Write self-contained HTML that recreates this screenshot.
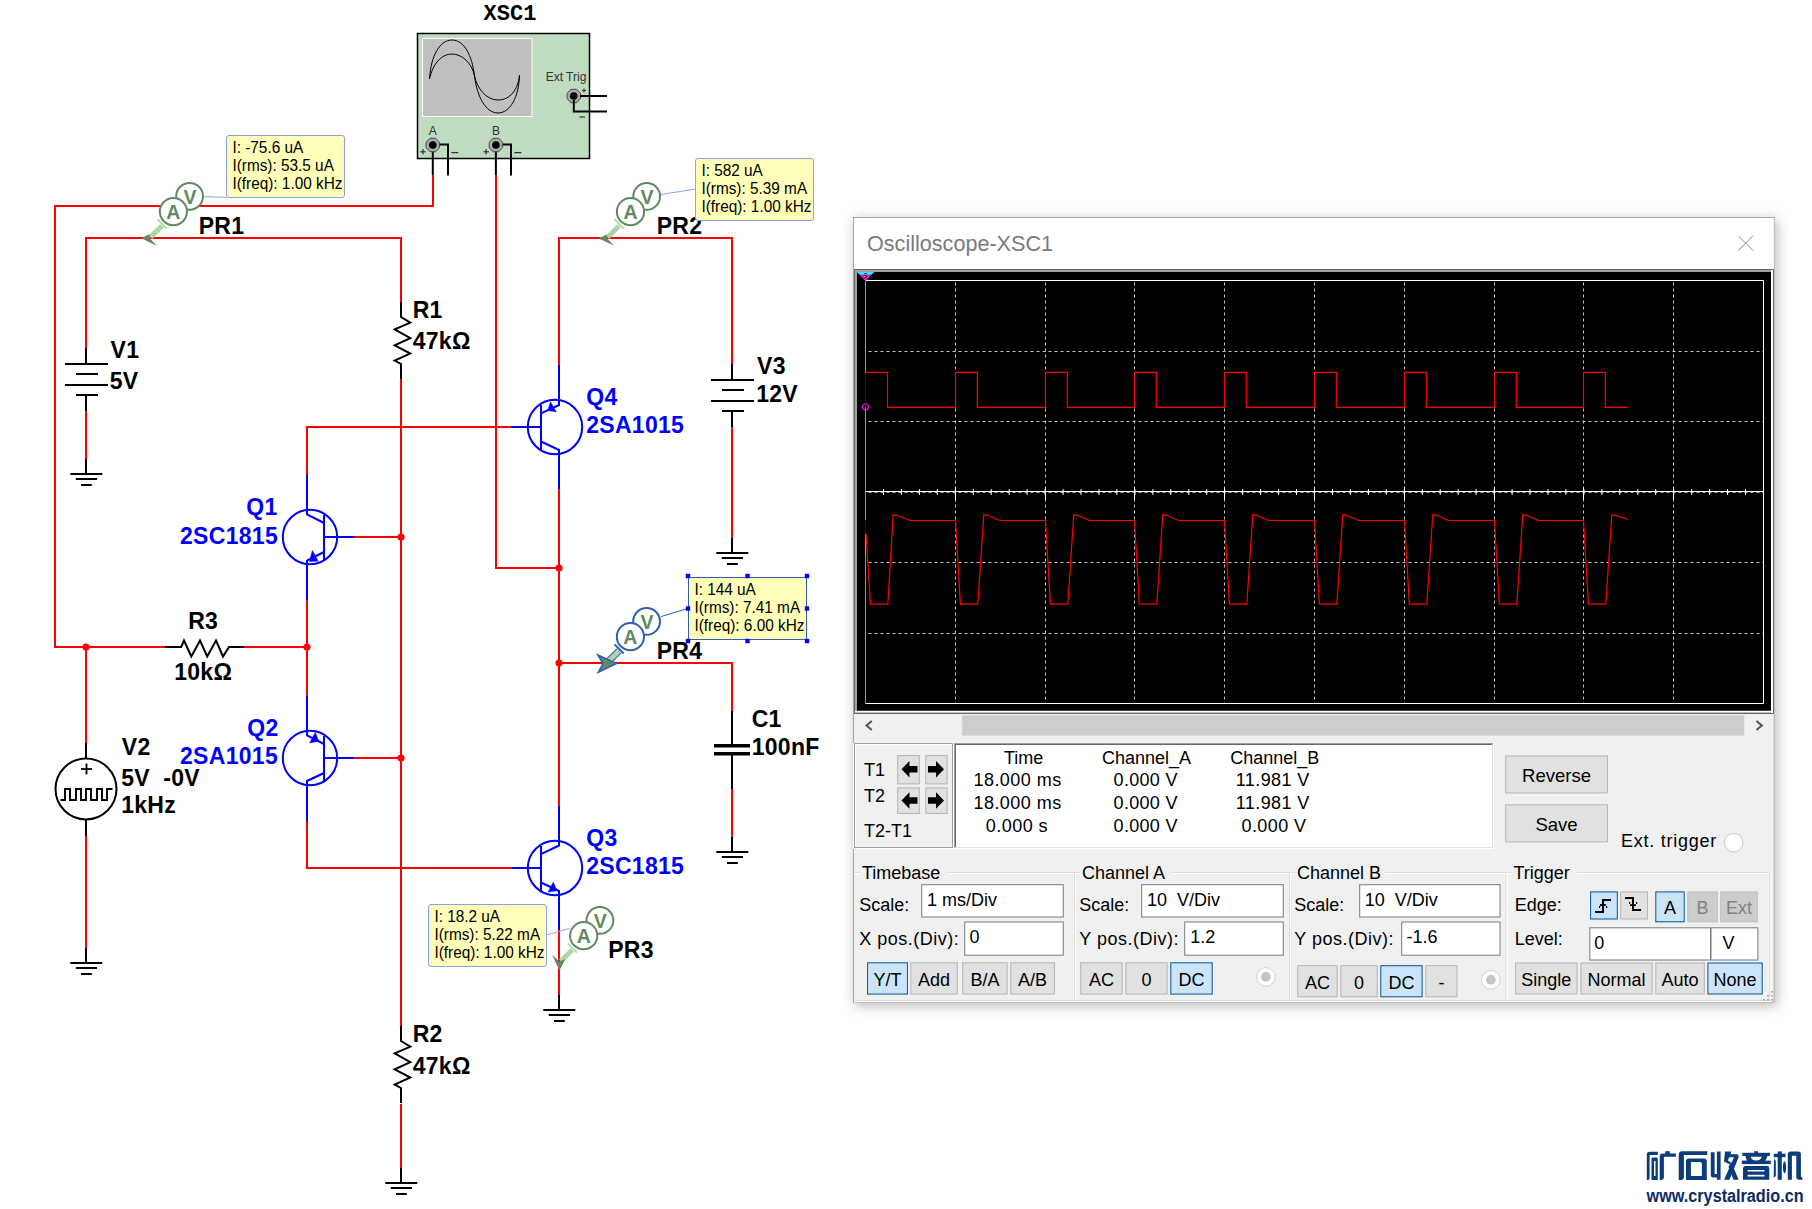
<!DOCTYPE html>
<html><head><meta charset="utf-8">
<style>
html,body{margin:0;padding:0;background:#fff;width:1812px;height:1209px;overflow:hidden}
svg{position:absolute;left:0;top:0}
</style></head><body>
<svg width="1812" height="1209" viewBox="0 0 1812 1209" shape-rendering="auto">
<polyline points="433,175 433,206 55,206 55,647 165,647" stroke="#ff0000" stroke-width="2" fill="none" />
<polyline points="86,349 86,238 401,238 401,302" stroke="#ff0000" stroke-width="2" fill="none" />
<line x1="86" y1="411" x2="86" y2="459" stroke="#ff0000" stroke-width="2"/>
<line x1="401" y1="379" x2="401" y2="1026" stroke="#ff0000" stroke-width="2"/>
<polyline points="307,475 307,427 511,427" stroke="#ff0000" stroke-width="2" fill="none" />
<line x1="354" y1="537" x2="401" y2="537" stroke="#ff0000" stroke-width="2"/>
<line x1="307" y1="600" x2="307" y2="696" stroke="#ff0000" stroke-width="2"/>
<line x1="244" y1="647" x2="307" y2="647" stroke="#ff0000" stroke-width="2"/>
<line x1="86" y1="647" x2="86" y2="743" stroke="#ff0000" stroke-width="2"/>
<line x1="86" y1="836" x2="86" y2="948" stroke="#ff0000" stroke-width="2"/>
<line x1="354" y1="758" x2="401" y2="758" stroke="#ff0000" stroke-width="2"/>
<polyline points="307,821 307,868 512,868" stroke="#ff0000" stroke-width="2" fill="none" />
<line x1="401" y1="1104" x2="401" y2="1168" stroke="#ff0000" stroke-width="2"/>
<polyline points="496,175 496,568 559,568" stroke="#ff0000" stroke-width="2" fill="none" />
<polyline points="559,365 559,238 732,238 732,365" stroke="#ff0000" stroke-width="2" fill="none" />
<line x1="732" y1="427" x2="732" y2="538" stroke="#ff0000" stroke-width="2"/>
<line x1="559" y1="489" x2="559" y2="806" stroke="#ff0000" stroke-width="2"/>
<polyline points="559,663 732,663 732,711" stroke="#ff0000" stroke-width="2" fill="none" />
<line x1="732" y1="789" x2="732" y2="837" stroke="#ff0000" stroke-width="2"/>
<line x1="559" y1="930" x2="559" y2="995" stroke="#ff0000" stroke-width="2"/>
<circle cx="86" cy="647" r="3.6" fill="#ff0000"/>
<circle cx="307" cy="647" r="3.6" fill="#ff0000"/>
<circle cx="401" cy="537" r="3.6" fill="#ff0000"/>
<circle cx="401" cy="758" r="3.6" fill="#ff0000"/>
<circle cx="559" cy="568" r="3.6" fill="#ff0000"/>
<circle cx="559" cy="663" r="3.6" fill="#ff0000"/>
<line x1="86" y1="348" x2="86" y2="364" stroke="#000000" stroke-width="2"/>
<line x1="65" y1="364" x2="108" y2="364" stroke="#000000" stroke-width="2"/>
<line x1="76" y1="374" x2="98" y2="374" stroke="#000000" stroke-width="2"/>
<line x1="65" y1="385" x2="108" y2="385" stroke="#000000" stroke-width="2"/>
<line x1="76" y1="395" x2="98" y2="395" stroke="#000000" stroke-width="2"/>
<line x1="86" y1="395" x2="86" y2="411" stroke="#000000" stroke-width="2"/>
<line x1="732" y1="364" x2="732" y2="380" stroke="#000000" stroke-width="2"/>
<line x1="711" y1="380" x2="754" y2="380" stroke="#000000" stroke-width="2"/>
<line x1="722" y1="390" x2="744" y2="390" stroke="#000000" stroke-width="2"/>
<line x1="711" y1="401" x2="754" y2="401" stroke="#000000" stroke-width="2"/>
<line x1="722" y1="411" x2="744" y2="411" stroke="#000000" stroke-width="2"/>
<line x1="732" y1="411" x2="732" y2="427" stroke="#000000" stroke-width="2"/>
<line x1="86" y1="459" x2="86" y2="474" stroke="#000000" stroke-width="2"/>
<line x1="70.3" y1="474" x2="102.3" y2="474" stroke="#000000" stroke-width="2"/>
<line x1="75.8" y1="479" x2="97" y2="479" stroke="#000000" stroke-width="2"/>
<line x1="81" y1="485" x2="91.8" y2="485" stroke="#000000" stroke-width="2"/>
<line x1="732" y1="538" x2="732" y2="553" stroke="#000000" stroke-width="2"/>
<line x1="716.3" y1="553" x2="748.3" y2="553" stroke="#000000" stroke-width="2"/>
<line x1="721.8" y1="558" x2="743" y2="558" stroke="#000000" stroke-width="2"/>
<line x1="727" y1="564" x2="737.8" y2="564" stroke="#000000" stroke-width="2"/>
<line x1="86" y1="948" x2="86" y2="963" stroke="#000000" stroke-width="2"/>
<line x1="70.3" y1="963" x2="102.3" y2="963" stroke="#000000" stroke-width="2"/>
<line x1="75.8" y1="968" x2="97" y2="968" stroke="#000000" stroke-width="2"/>
<line x1="81" y1="974" x2="91.8" y2="974" stroke="#000000" stroke-width="2"/>
<line x1="401" y1="1168" x2="401" y2="1183" stroke="#000000" stroke-width="2"/>
<line x1="385.3" y1="1183" x2="417.3" y2="1183" stroke="#000000" stroke-width="2"/>
<line x1="390.8" y1="1188" x2="412" y2="1188" stroke="#000000" stroke-width="2"/>
<line x1="396" y1="1194" x2="406.8" y2="1194" stroke="#000000" stroke-width="2"/>
<line x1="732" y1="837" x2="732" y2="852" stroke="#000000" stroke-width="2"/>
<line x1="716.3" y1="852" x2="748.3" y2="852" stroke="#000000" stroke-width="2"/>
<line x1="721.8" y1="857" x2="743" y2="857" stroke="#000000" stroke-width="2"/>
<line x1="727" y1="863" x2="737.8" y2="863" stroke="#000000" stroke-width="2"/>
<line x1="559" y1="995" x2="559" y2="1010" stroke="#000000" stroke-width="2"/>
<line x1="543.3" y1="1010" x2="575.3" y2="1010" stroke="#000000" stroke-width="2"/>
<line x1="548.8" y1="1015" x2="570" y2="1015" stroke="#000000" stroke-width="2"/>
<line x1="554" y1="1021" x2="564.8" y2="1021" stroke="#000000" stroke-width="2"/>
<polyline points="401,302 401,317 410.3,322.6 394.7,329.3 410.3,338.2 394.7,345.3 410.3,353.5 394.7,360.5 401,364 401,379" stroke="#000000" stroke-width="2" fill="none" />
<polyline points="401,1026 401,1041 410.3,1046.6 394.7,1053.3 410.3,1062.2 394.7,1069.3 410.3,1077.5 394.7,1084.5 401,1088 401,1103" stroke="#000000" stroke-width="2" fill="none" />
<polyline points="165,647 181.2,647 184,640.5 191.3,656.5 200,640.5 207.2,656.5 216,640.5 223,656.5 229,647 244,647" stroke="#000000" stroke-width="2" fill="none" />
<line x1="732" y1="711" x2="732" y2="746" stroke="#000000" stroke-width="2"/>
<rect x="714" y="744" width="36" height="3.5" fill="#000"/>
<rect x="714" y="752" width="36" height="3.5" fill="#000"/>
<line x1="732" y1="755" x2="732" y2="789" stroke="#000000" stroke-width="2"/>
<line x1="86" y1="743" x2="86" y2="758" stroke="#000000" stroke-width="2"/>
<circle cx="86" cy="789" r="30.5" fill="none" stroke="#000" stroke-width="2"/>
<line x1="86" y1="820" x2="86" y2="836" stroke="#000000" stroke-width="2"/>
<line x1="81" y1="769" x2="92" y2="769" stroke="#000000" stroke-width="1.8"/>
<line x1="86.5" y1="763.5" x2="86.5" y2="774.5" stroke="#000000" stroke-width="1.8"/>
<polyline points="60.5,800 65,800 65,789 70,789 70,800 76,800 76,789 81,789 81,800 86,800 86,789 91,789 91,800 97,800 97,789 102,789 102,800 107,800 107,789 112.5,789" stroke="#000000" stroke-width="1.9" fill="none" />
<circle cx="310" cy="537" r="27.2" fill="none" stroke="#0000ff" stroke-width="2"/>
<polyline points="307,475 307,514.5 324,523" stroke="#0000ff" stroke-width="2" fill="none" />
<polyline points="324,552 307,560.5 307,600" stroke="#0000ff" stroke-width="2" fill="none" />
<line x1="324" y1="515" x2="324" y2="560" stroke="#0000ff" stroke-width="2"/>
<line x1="324" y1="537" x2="354" y2="537" stroke="#0000ff" stroke-width="2"/>
<polygon points="312.4,550.5 309.5,561.5 318,561" fill="#0000ff" stroke="#0000ff" stroke-width="0.6"/>
<circle cx="310" cy="758" r="27.2" fill="none" stroke="#0000ff" stroke-width="2"/>
<polyline points="307,696 307,735.5 324,744" stroke="#0000ff" stroke-width="2" fill="none" />
<polyline points="324,773 307,781 307,821" stroke="#0000ff" stroke-width="2" fill="none" />
<line x1="324" y1="736" x2="324" y2="781" stroke="#0000ff" stroke-width="2"/>
<line x1="324" y1="758" x2="354" y2="758" stroke="#0000ff" stroke-width="2"/>
<polygon points="315.2,732.5 309.8,743 318.5,741" fill="#0000ff" stroke="#0000ff" stroke-width="0.6"/>
<circle cx="555" cy="427" r="27.2" fill="none" stroke="#0000ff" stroke-width="2"/>
<polyline points="559,365 559,405 541,413.3" stroke="#0000ff" stroke-width="2" fill="none" />
<polyline points="541,441.5 559,450 559,489" stroke="#0000ff" stroke-width="2" fill="none" />
<line x1="541" y1="405" x2="541" y2="450" stroke="#0000ff" stroke-width="2"/>
<line x1="541" y1="427" x2="511" y2="427" stroke="#0000ff" stroke-width="2"/>
<polygon points="550.5,402 547.8,410.5 556.2,411.8" fill="#0000ff" stroke="#0000ff" stroke-width="0.6"/>
<circle cx="555" cy="868" r="27.2" fill="none" stroke="#0000ff" stroke-width="2"/>
<polyline points="559,806 559,845.5 541,854.2" stroke="#0000ff" stroke-width="2" fill="none" />
<polyline points="541,882.5 559,891 559,930" stroke="#0000ff" stroke-width="2" fill="none" />
<line x1="541" y1="846" x2="541" y2="891" stroke="#0000ff" stroke-width="2"/>
<line x1="541" y1="868" x2="512" y2="868" stroke="#0000ff" stroke-width="2"/>
<polygon points="553.2,882.3 548.2,892 557,890.6" fill="#0000ff" stroke="#0000ff" stroke-width="0.6"/>
<text x="110.5" y="358" font-family="Liberation Sans" font-size="23" font-weight="bold" fill="#000000" text-anchor="start"  letter-spacing="0.3">V1</text>
<text x="109.7" y="389" font-family="Liberation Sans" font-size="23" font-weight="bold" fill="#000000" text-anchor="start"  letter-spacing="0.3">5V</text>
<text x="412.7" y="318" font-family="Liberation Sans" font-size="23" font-weight="bold" fill="#000000" text-anchor="start"  letter-spacing="0.3">R1</text>
<text x="412.7" y="349" font-family="Liberation Sans" font-size="23" font-weight="bold" fill="#000000" text-anchor="start"  letter-spacing="0.3">47kΩ</text>
<text x="412.7" y="1042" font-family="Liberation Sans" font-size="23" font-weight="bold" fill="#000000" text-anchor="start"  letter-spacing="0.3">R2</text>
<text x="412.7" y="1073.5" font-family="Liberation Sans" font-size="23" font-weight="bold" fill="#000000" text-anchor="start"  letter-spacing="0.3">47kΩ</text>
<text x="188.2" y="629" font-family="Liberation Sans" font-size="23" font-weight="bold" fill="#000000" text-anchor="start"  letter-spacing="0.3">R3</text>
<text x="174.2" y="680" font-family="Liberation Sans" font-size="23" font-weight="bold" fill="#000000" text-anchor="start"  letter-spacing="0.3">10kΩ</text>
<text x="121.8" y="755" font-family="Liberation Sans" font-size="23" font-weight="bold" fill="#000000" text-anchor="start"  letter-spacing="0.3">V2</text>
<text x="121.2" y="786" font-family="Liberation Sans" font-size="23" font-weight="bold" fill="#000000" text-anchor="start"  letter-spacing="0.3">5V&#160;&#160;-0V</text>
<text x="121.2" y="812.5" font-family="Liberation Sans" font-size="23" font-weight="bold" fill="#000000" text-anchor="start"  letter-spacing="0.3">1kHz</text>
<text x="757" y="373.5" font-family="Liberation Sans" font-size="23" font-weight="bold" fill="#000000" text-anchor="start"  letter-spacing="0.3">V3</text>
<text x="756.2" y="401.5" font-family="Liberation Sans" font-size="23" font-weight="bold" fill="#000000" text-anchor="start"  letter-spacing="0.3">12V</text>
<text x="751.7" y="727" font-family="Liberation Sans" font-size="23" font-weight="bold" fill="#000000" text-anchor="start"  letter-spacing="0.3">C1</text>
<text x="751.7" y="754.5" font-family="Liberation Sans" font-size="23" font-weight="bold" fill="#000000" text-anchor="start"  letter-spacing="0.3">100nF</text>
<text x="198.7" y="233.5" font-family="Liberation Sans" font-size="23" font-weight="bold" fill="#000000" text-anchor="start"  letter-spacing="0.3">PR1</text>
<text x="656.7" y="233.5" font-family="Liberation Sans" font-size="23" font-weight="bold" fill="#000000" text-anchor="start"  letter-spacing="0.3">PR2</text>
<text x="608.2" y="958" font-family="Liberation Sans" font-size="23" font-weight="bold" fill="#000000" text-anchor="start"  letter-spacing="0.3">PR3</text>
<text x="656.7" y="658.5" font-family="Liberation Sans" font-size="23" font-weight="bold" fill="#000000" text-anchor="start"  letter-spacing="0.3">PR4</text>
<text x="277.6" y="515" font-family="Liberation Sans" font-size="23" font-weight="bold" fill="#0000ff" text-anchor="end"  letter-spacing="0.3">Q1</text>
<text x="278" y="543.5" font-family="Liberation Sans" font-size="23" font-weight="bold" fill="#0000ff" text-anchor="end"  letter-spacing="0.3">2SC1815</text>
<text x="278.5" y="736" font-family="Liberation Sans" font-size="23" font-weight="bold" fill="#0000ff" text-anchor="end"  letter-spacing="0.3">Q2</text>
<text x="278" y="763.5" font-family="Liberation Sans" font-size="23" font-weight="bold" fill="#0000ff" text-anchor="end"  letter-spacing="0.3">2SA1015</text>
<text x="586.2" y="404.5" font-family="Liberation Sans" font-size="23" font-weight="bold" fill="#0000ff" text-anchor="start"  letter-spacing="0.3">Q4</text>
<text x="586.2" y="433" font-family="Liberation Sans" font-size="23" font-weight="bold" fill="#0000ff" text-anchor="start"  letter-spacing="0.3">2SA1015</text>
<text x="586.2" y="845.5" font-family="Liberation Sans" font-size="23" font-weight="bold" fill="#0000ff" text-anchor="start"  letter-spacing="0.3">Q3</text>
<text x="586.2" y="874" font-family="Liberation Sans" font-size="23" font-weight="bold" fill="#0000ff" text-anchor="start"  letter-spacing="0.3">2SC1815</text>
<line x1="204" y1="196.7" x2="226.5" y2="197.3" stroke="#8ea2e6" stroke-width="1"/>
<line x1="661" y1="194.5" x2="695.5" y2="189" stroke="#8ea2e6" stroke-width="1"/>
<line x1="569.5" y1="928.4" x2="547.5" y2="934.8" stroke="#8ea2e6" stroke-width="1"/>
<line x1="661" y1="616.6" x2="688.5" y2="608.3" stroke="#2f5fae" stroke-width="1"/>
<line x1="161.9" y1="225.9" x2="150.4" y2="237.1" stroke="#acd6a6" stroke-width="5"/>
<line x1="157.6" y1="219.29999999999998" x2="166.6" y2="228.4" stroke="#b2dcae" stroke-width="2"/>
<polygon points="141.2,238.3 149.3,234.3 150.5,239 156.7,245.7" fill="#5f8a5f" stroke="none" stroke-width="0"/>
<circle cx="189.6" cy="196.29999999999998" r="13.4" fill="#fff" stroke="#5f8a5f" stroke-width="2"/>
<circle cx="173.4" cy="211.6" r="13.6" fill="#fff" stroke="#5f8a5f" stroke-width="2"/>
<text x="189.9" y="203.49999999999997" font-family="Liberation Sans" font-size="19.5" font-weight="bold" fill="#5f8a5f" text-anchor="middle" >V</text>
<text x="173.4" y="218.9" font-family="Liberation Sans" font-size="19.5" font-weight="bold" fill="#5f8a5f" text-anchor="middle" >A</text>
<line x1="619.0" y1="226.0" x2="607.5" y2="237.2" stroke="#acd6a6" stroke-width="5"/>
<line x1="614.7" y1="219.39999999999998" x2="623.7" y2="228.5" stroke="#b2dcae" stroke-width="2"/>
<polygon points="598.6,238.6 606.5,234.5 607.8,239.3 614,245.5" fill="#5f8a5f" stroke="none" stroke-width="0"/>
<circle cx="646.7" cy="196.39999999999998" r="13.4" fill="#fff" stroke="#5f8a5f" stroke-width="2"/>
<circle cx="630.5" cy="211.7" r="13.6" fill="#fff" stroke="#5f8a5f" stroke-width="2"/>
<text x="647.0" y="203.59999999999997" font-family="Liberation Sans" font-size="19.5" font-weight="bold" fill="#5f8a5f" text-anchor="middle" >V</text>
<text x="630.5" y="219.0" font-family="Liberation Sans" font-size="19.5" font-weight="bold" fill="#5f8a5f" text-anchor="middle" >A</text>
<line x1="572.2" y1="950.0" x2="560.7" y2="961.2" stroke="#acd6a6" stroke-width="5"/>
<line x1="567.9000000000001" y1="943.4000000000001" x2="576.9000000000001" y2="952.5" stroke="#b2dcae" stroke-width="2"/>
<polygon points="559.5,970.5 551.9,954.5 559.2,961.5 565.3,959.3" fill="#5f8a5f" stroke="none" stroke-width="0"/>
<circle cx="599.9000000000001" cy="920.4000000000001" r="13.4" fill="#fff" stroke="#5f8a5f" stroke-width="2"/>
<circle cx="583.7" cy="935.7" r="13.6" fill="#fff" stroke="#5f8a5f" stroke-width="2"/>
<text x="600.2" y="927.6000000000001" font-family="Liberation Sans" font-size="19.5" font-weight="bold" fill="#5f8a5f" text-anchor="middle" >V</text>
<text x="583.7" y="943.0" font-family="Liberation Sans" font-size="19.5" font-weight="bold" fill="#5f8a5f" text-anchor="middle" >A</text>
<line x1="618.9" y1="651.0" x2="607.4" y2="662.2" stroke="#2f5fae" stroke-width="7"/>
<line x1="618.9" y1="651.0" x2="607.4" y2="662.2" stroke="#acd6a6" stroke-width="5"/>
<line x1="614.6" y1="644.4000000000001" x2="623.6" y2="653.5" stroke="#2f5fae" stroke-width="2"/>
<polygon points="616.5,663.5 597.8,655 603,663.5 598.3,672.3" fill="#5f8a5f" stroke="#2f5fae" stroke-width="1.5"/>
<circle cx="646.6" cy="621.4000000000001" r="13.4" fill="#fff" stroke="#2f5fae" stroke-width="2"/>
<circle cx="630.4" cy="636.7" r="13.6" fill="#fff" stroke="#2f5fae" stroke-width="2"/>
<text x="646.9" y="628.6000000000001" font-family="Liberation Sans" font-size="19.5" font-weight="bold" fill="#5f8a5f" text-anchor="middle" >V</text>
<text x="630.4" y="644.0" font-family="Liberation Sans" font-size="19.5" font-weight="bold" fill="#5f8a5f" text-anchor="middle" >A</text>
<rect x="226.5" y="135.5" width="118" height="62" rx="2.5" fill="#ffffb9" stroke="#8ea2e6" stroke-width="1"/>
<text transform="translate(232.4,152.9) scale(0.96,1)" x="0" y="0" font-family="Liberation Sans" font-size="16" fill="#000">I: -75.6 uA</text>
<text transform="translate(232.4,170.9) scale(0.96,1)" x="0" y="0" font-family="Liberation Sans" font-size="16" fill="#000">I(rms): 53.5 uA</text>
<text transform="translate(232.4,188.9) scale(0.96,1)" x="0" y="0" font-family="Liberation Sans" font-size="16" fill="#000">I(freq): 1.00 kHz</text>
<rect x="695.5" y="158.5" width="118" height="62" rx="2.5" fill="#ffffb9" stroke="#8ea2e6" stroke-width="1"/>
<text transform="translate(701.4,175.9) scale(0.96,1)" x="0" y="0" font-family="Liberation Sans" font-size="16" fill="#000">I: 582 uA</text>
<text transform="translate(701.4,193.9) scale(0.96,1)" x="0" y="0" font-family="Liberation Sans" font-size="16" fill="#000">I(rms): 5.39 mA</text>
<text transform="translate(701.4,211.9) scale(0.96,1)" x="0" y="0" font-family="Liberation Sans" font-size="16" fill="#000">I(freq): 1.00 kHz</text>
<rect x="428.5" y="904.5" width="118" height="62" rx="2.5" fill="#ffffb9" stroke="#8ea2e6" stroke-width="1"/>
<text transform="translate(434.4,921.9) scale(0.96,1)" x="0" y="0" font-family="Liberation Sans" font-size="16" fill="#000">I: 18.2 uA</text>
<text transform="translate(434.4,939.9) scale(0.96,1)" x="0" y="0" font-family="Liberation Sans" font-size="16" fill="#000">I(rms): 5.22 mA</text>
<text transform="translate(434.4,957.9) scale(0.96,1)" x="0" y="0" font-family="Liberation Sans" font-size="16" fill="#000">I(freq): 1.00 kHz</text>
<rect x="688.5" y="577.5" width="118" height="62" fill="#ffffb9" stroke="#2f5fae" stroke-width="1"/>
<text transform="translate(694.4,594.9) scale(0.96,1)" x="0" y="0" font-family="Liberation Sans" font-size="16" fill="#000">I: 144 uA</text>
<text transform="translate(694.4,612.9) scale(0.96,1)" x="0" y="0" font-family="Liberation Sans" font-size="16" fill="#000">I(rms): 7.41 mA</text>
<text transform="translate(694.4,630.9) scale(0.96,1)" x="0" y="0" font-family="Liberation Sans" font-size="16" fill="#000">I(freq): 6.00 kHz</text>
<rect x="685.8" y="573.8" width="4.4" height="4.4" fill="#0000ff"/>
<rect x="685.8" y="606.3" width="4.4" height="4.4" fill="#0000ff"/>
<rect x="685.8" y="638.8" width="4.4" height="4.4" fill="#0000ff"/>
<rect x="745.3" y="573.8" width="4.4" height="4.4" fill="#0000ff"/>
<rect x="745.3" y="638.8" width="4.4" height="4.4" fill="#0000ff"/>
<rect x="804.8" y="573.8" width="4.4" height="4.4" fill="#0000ff"/>
<rect x="804.8" y="606.3" width="4.4" height="4.4" fill="#0000ff"/>
<rect x="804.8" y="638.8" width="4.4" height="4.4" fill="#0000ff"/>
<text x="510" y="20.3" font-family="Liberation Mono" font-size="22" font-weight="bold" fill="#000000" text-anchor="middle" >XSC1</text>
<rect x="417.5" y="33.5" width="172" height="125" fill="#c0dcc0" stroke="#000" stroke-width="1.5"/>
<rect x="422.5" y="38.5" width="109.5" height="78" fill="#c0c0c0" stroke="#fff" stroke-width="1"/>
<path d="M429.5,79 C431,55 440,40 452,40 C464,40 472,55 474.5,76 C477,97 486,113 498,113 C510,113 519,97 519.5,75" fill="none" stroke="#000" stroke-width="1"/>
<path d="M429.5,79 C433,63 442,54 452,54 C462,54 472,63 474.5,76 C477,88 486,100 498,100 C510,100 518,90 519.5,75" fill="none" stroke="#000" stroke-width="1"/>
<text x="566" y="80.5" font-family="Liberation Sans" font-size="12" font-weight="normal" fill="#333" text-anchor="middle" >Ext Trig</text>
<polyline points="432.8,175 432.8,145" stroke="#000000" stroke-width="2" fill="none" />
<polygon points="430.0,138.3 435.6,138.3 439.5,142.2 439.5,147.8 435.6,151.7 430.0,151.7 426.1,147.8 426.1,142.2" fill="#a8a8b0" stroke="#444" stroke-width="1"/>
<circle cx="432.8" cy="145" r="3.8" fill="#000"/>
<polyline points="439.8,144.6 448,144.6 448,175.5" stroke="#000000" stroke-width="2" fill="none" />
<text x="432.8" y="135" font-family="Liberation Sans" font-size="12" font-weight="normal" fill="#333" text-anchor="middle" >A</text>
<line x1="420.3" y1="151.8" x2="425.8" y2="151.8" stroke="#333" stroke-width="1.2"/>
<line x1="423.05" y1="149" x2="423.05" y2="154.6" stroke="#333" stroke-width="1.2"/>
<line x1="451.3" y1="152.6" x2="458.3" y2="152.6" stroke="#333" stroke-width="1.3"/>
<polyline points="495.9,175 495.9,145" stroke="#000000" stroke-width="2" fill="none" />
<polygon points="493.09999999999997,138.3 498.7,138.3 502.59999999999997,142.2 502.59999999999997,147.8 498.7,151.7 493.09999999999997,151.7 489.2,147.8 489.2,142.2" fill="#a8a8b0" stroke="#444" stroke-width="1"/>
<circle cx="495.9" cy="145" r="3.8" fill="#000"/>
<polyline points="502.9,144.6 511,144.6 511,175.5" stroke="#000000" stroke-width="2" fill="none" />
<text x="495.9" y="135" font-family="Liberation Sans" font-size="12" font-weight="normal" fill="#333" text-anchor="middle" >B</text>
<line x1="483.4" y1="151.8" x2="488.9" y2="151.8" stroke="#333" stroke-width="1.2"/>
<line x1="486.15" y1="149" x2="486.15" y2="154.6" stroke="#333" stroke-width="1.2"/>
<line x1="514.4" y1="152.6" x2="521.4" y2="152.6" stroke="#333" stroke-width="1.3"/>
<polygon points="571.0,89.3 576.5999999999999,89.3 580.5,93.2 580.5,98.8 576.5999999999999,102.7 571.0,102.7 567.0999999999999,98.8 567.0999999999999,93.2" fill="#a8a8b0" stroke="#444" stroke-width="1"/>
<circle cx="573.8" cy="96" r="3.8" fill="#000"/>
<polyline points="580,96 607,96" stroke="#000000" stroke-width="2" fill="none" />
<polyline points="573.8,100 573.8,111.5 607,111.5" stroke="#000000" stroke-width="2" fill="none" />
<line x1="582" y1="90.5" x2="586" y2="90.5" stroke="#333" stroke-width="1.1"/>
<line x1="584" y1="88.5" x2="584" y2="92.5" stroke="#333" stroke-width="1.1"/>
<line x1="579.5" y1="117" x2="585" y2="117" stroke="#333" stroke-width="1.2"/>
</svg>
<div style="position:absolute;left:853px;top:217px;width:922px;height:786px;box-shadow:2px 3px 12px rgba(0,0,0,0.28)"></div>
<svg width="1812" height="1209" viewBox="0 0 1812 1209">
<rect x="853.5" y="217.5" width="920.7" height="784.7" fill="#f0f0f0" stroke="#a6a6a6" stroke-width="1" />
<rect x="854" y="218" width="919.7" height="51" fill="#ffffff" stroke="none" stroke-width="1" />
<text x="867" y="251" font-family="Liberation Sans" font-size="21.6" fill="#7a7a7a" text-anchor="start" >Oscilloscope-XSC1</text>
<line x1="1738.3" y1="235.8" x2="1753" y2="250.5" stroke="#8a8a8a" stroke-width="1"/>
<line x1="1753" y1="235.8" x2="1738.3" y2="250.5" stroke="#8a8a8a" stroke-width="1"/>
<rect x="854" y="269" width="920" height="445" fill="#000" stroke="none" stroke-width="1" />
<line x1="854" y1="269.5" x2="1774" y2="269.5" stroke="#6a6a6a" stroke-width="1"/>
<line x1="854" y1="271" x2="1772" y2="271" stroke="#a0a0a0" stroke-width="2"/>
<line x1="854.5" y1="269" x2="854.5" y2="714" stroke="#6a6a6a" stroke-width="1"/>
<line x1="856" y1="270" x2="856" y2="712" stroke="#a0a0a0" stroke-width="2"/>
<line x1="855" y1="711.8" x2="1773" y2="711.8" stroke="#ffffff" stroke-width="2"/>
<line x1="1772" y1="270" x2="1772" y2="713" stroke="#ffffff" stroke-width="2"/>
<line x1="854" y1="713.5" x2="1774" y2="713.5" stroke="#6a6a6a" stroke-width="1"/>
<line x1="1773.5" y1="269" x2="1773.5" y2="714" stroke="#6a6a6a" stroke-width="1"/>
<line x1="955.5" y1="282.5" x2="955.5" y2="703.5" stroke="#c4c4c4" stroke-width="1" stroke-dasharray="3 3"/>
<line x1="1045.5" y1="282.5" x2="1045.5" y2="703.5" stroke="#c4c4c4" stroke-width="1" stroke-dasharray="3 3"/>
<line x1="1134.5" y1="282.5" x2="1134.5" y2="703.5" stroke="#c4c4c4" stroke-width="1" stroke-dasharray="3 3"/>
<line x1="1224.5" y1="282.5" x2="1224.5" y2="703.5" stroke="#c4c4c4" stroke-width="1" stroke-dasharray="3 3"/>
<line x1="1314.5" y1="282.5" x2="1314.5" y2="703.5" stroke="#c4c4c4" stroke-width="1" stroke-dasharray="3 3"/>
<line x1="1404.5" y1="282.5" x2="1404.5" y2="703.5" stroke="#c4c4c4" stroke-width="1" stroke-dasharray="3 3"/>
<line x1="1494.5" y1="282.5" x2="1494.5" y2="703.5" stroke="#c4c4c4" stroke-width="1" stroke-dasharray="3 3"/>
<line x1="1583.5" y1="282.5" x2="1583.5" y2="703.5" stroke="#c4c4c4" stroke-width="1" stroke-dasharray="3 3"/>
<line x1="1673.5" y1="282.5" x2="1673.5" y2="703.5" stroke="#c4c4c4" stroke-width="1" stroke-dasharray="3 3"/>
<line x1="868.5" y1="351.5" x2="1763.5" y2="351.5" stroke="#c4c4c4" stroke-width="1" stroke-dasharray="3 3"/>
<line x1="868.5" y1="421.5" x2="1763.5" y2="421.5" stroke="#c4c4c4" stroke-width="1" stroke-dasharray="3 3"/>
<line x1="868.5" y1="562.5" x2="1763.5" y2="562.5" stroke="#c4c4c4" stroke-width="1" stroke-dasharray="3 3"/>
<line x1="868.5" y1="633.5" x2="1763.5" y2="633.5" stroke="#c4c4c4" stroke-width="1" stroke-dasharray="3 3"/>
<line x1="868.5" y1="492.5" x2="1763.5" y2="492.5" stroke="#a8a8a8" stroke-width="1" stroke-dasharray="3 3"/>
<line x1="865.5" y1="491.5" x2="1763.5" y2="491.5" stroke="#ffffff" stroke-width="1.2"/>
<line x1="865.5" y1="489.0" x2="865.5" y2="495.0" stroke="#fff" stroke-width="1"/>
<line x1="883.5" y1="489.0" x2="883.5" y2="495.0" stroke="#fff" stroke-width="1"/>
<line x1="901.4" y1="489.0" x2="901.4" y2="495.0" stroke="#fff" stroke-width="1"/>
<line x1="919.4" y1="489.0" x2="919.4" y2="495.0" stroke="#fff" stroke-width="1"/>
<line x1="937.3" y1="489.0" x2="937.3" y2="495.0" stroke="#fff" stroke-width="1"/>
<line x1="955.3" y1="489.0" x2="955.3" y2="495.0" stroke="#fff" stroke-width="1"/>
<line x1="973.3" y1="489.0" x2="973.3" y2="495.0" stroke="#fff" stroke-width="1"/>
<line x1="991.2" y1="489.0" x2="991.2" y2="495.0" stroke="#fff" stroke-width="1"/>
<line x1="1009.2" y1="489.0" x2="1009.2" y2="495.0" stroke="#fff" stroke-width="1"/>
<line x1="1027.1" y1="489.0" x2="1027.1" y2="495.0" stroke="#fff" stroke-width="1"/>
<line x1="1045.1" y1="489.0" x2="1045.1" y2="495.0" stroke="#fff" stroke-width="1"/>
<line x1="1063.1" y1="489.0" x2="1063.1" y2="495.0" stroke="#fff" stroke-width="1"/>
<line x1="1081.0" y1="489.0" x2="1081.0" y2="495.0" stroke="#fff" stroke-width="1"/>
<line x1="1099.0" y1="489.0" x2="1099.0" y2="495.0" stroke="#fff" stroke-width="1"/>
<line x1="1116.9" y1="489.0" x2="1116.9" y2="495.0" stroke="#fff" stroke-width="1"/>
<line x1="1134.9" y1="489.0" x2="1134.9" y2="495.0" stroke="#fff" stroke-width="1"/>
<line x1="1152.9" y1="489.0" x2="1152.9" y2="495.0" stroke="#fff" stroke-width="1"/>
<line x1="1170.8" y1="489.0" x2="1170.8" y2="495.0" stroke="#fff" stroke-width="1"/>
<line x1="1188.8" y1="489.0" x2="1188.8" y2="495.0" stroke="#fff" stroke-width="1"/>
<line x1="1206.7" y1="489.0" x2="1206.7" y2="495.0" stroke="#fff" stroke-width="1"/>
<line x1="1224.7" y1="489.0" x2="1224.7" y2="495.0" stroke="#fff" stroke-width="1"/>
<line x1="1242.7" y1="489.0" x2="1242.7" y2="495.0" stroke="#fff" stroke-width="1"/>
<line x1="1260.6" y1="489.0" x2="1260.6" y2="495.0" stroke="#fff" stroke-width="1"/>
<line x1="1278.6" y1="489.0" x2="1278.6" y2="495.0" stroke="#fff" stroke-width="1"/>
<line x1="1296.5" y1="489.0" x2="1296.5" y2="495.0" stroke="#fff" stroke-width="1"/>
<line x1="1314.5" y1="489.0" x2="1314.5" y2="495.0" stroke="#fff" stroke-width="1"/>
<line x1="1332.5" y1="489.0" x2="1332.5" y2="495.0" stroke="#fff" stroke-width="1"/>
<line x1="1350.4" y1="489.0" x2="1350.4" y2="495.0" stroke="#fff" stroke-width="1"/>
<line x1="1368.4" y1="489.0" x2="1368.4" y2="495.0" stroke="#fff" stroke-width="1"/>
<line x1="1386.3" y1="489.0" x2="1386.3" y2="495.0" stroke="#fff" stroke-width="1"/>
<line x1="1404.3" y1="489.0" x2="1404.3" y2="495.0" stroke="#fff" stroke-width="1"/>
<line x1="1422.3" y1="489.0" x2="1422.3" y2="495.0" stroke="#fff" stroke-width="1"/>
<line x1="1440.2" y1="489.0" x2="1440.2" y2="495.0" stroke="#fff" stroke-width="1"/>
<line x1="1458.2" y1="489.0" x2="1458.2" y2="495.0" stroke="#fff" stroke-width="1"/>
<line x1="1476.1" y1="489.0" x2="1476.1" y2="495.0" stroke="#fff" stroke-width="1"/>
<line x1="1494.1" y1="489.0" x2="1494.1" y2="495.0" stroke="#fff" stroke-width="1"/>
<line x1="1512.1" y1="489.0" x2="1512.1" y2="495.0" stroke="#fff" stroke-width="1"/>
<line x1="1530.0" y1="489.0" x2="1530.0" y2="495.0" stroke="#fff" stroke-width="1"/>
<line x1="1548.0" y1="489.0" x2="1548.0" y2="495.0" stroke="#fff" stroke-width="1"/>
<line x1="1565.9" y1="489.0" x2="1565.9" y2="495.0" stroke="#fff" stroke-width="1"/>
<line x1="1583.9" y1="489.0" x2="1583.9" y2="495.0" stroke="#fff" stroke-width="1"/>
<line x1="1601.9" y1="489.0" x2="1601.9" y2="495.0" stroke="#fff" stroke-width="1"/>
<line x1="1619.8" y1="489.0" x2="1619.8" y2="495.0" stroke="#fff" stroke-width="1"/>
<line x1="1637.8" y1="489.0" x2="1637.8" y2="495.0" stroke="#fff" stroke-width="1"/>
<line x1="1655.7" y1="489.0" x2="1655.7" y2="495.0" stroke="#fff" stroke-width="1"/>
<line x1="1673.7" y1="489.0" x2="1673.7" y2="495.0" stroke="#fff" stroke-width="1"/>
<line x1="1691.7" y1="489.0" x2="1691.7" y2="495.0" stroke="#fff" stroke-width="1"/>
<line x1="1709.6" y1="489.0" x2="1709.6" y2="495.0" stroke="#fff" stroke-width="1"/>
<line x1="1727.6" y1="489.0" x2="1727.6" y2="495.0" stroke="#fff" stroke-width="1"/>
<line x1="1745.5" y1="489.0" x2="1745.5" y2="495.0" stroke="#fff" stroke-width="1"/>
<line x1="1763.5" y1="489.0" x2="1763.5" y2="495.0" stroke="#fff" stroke-width="1"/>
<line x1="865.5" y1="487.5" x2="865.5" y2="499.5" stroke="#fff" stroke-width="1"/>
<line x1="955.5" y1="487.5" x2="955.5" y2="499.5" stroke="#fff" stroke-width="1"/>
<line x1="1045.5" y1="487.5" x2="1045.5" y2="499.5" stroke="#fff" stroke-width="1"/>
<line x1="1134.5" y1="487.5" x2="1134.5" y2="499.5" stroke="#fff" stroke-width="1"/>
<line x1="1224.5" y1="487.5" x2="1224.5" y2="499.5" stroke="#fff" stroke-width="1"/>
<line x1="1314.5" y1="487.5" x2="1314.5" y2="499.5" stroke="#fff" stroke-width="1"/>
<line x1="1404.5" y1="487.5" x2="1404.5" y2="499.5" stroke="#fff" stroke-width="1"/>
<line x1="1494.5" y1="487.5" x2="1494.5" y2="499.5" stroke="#fff" stroke-width="1"/>
<line x1="1583.5" y1="487.5" x2="1583.5" y2="499.5" stroke="#fff" stroke-width="1"/>
<line x1="1673.5" y1="487.5" x2="1673.5" y2="499.5" stroke="#fff" stroke-width="1"/>
<line x1="865.5" y1="280.5" x2="1763.5" y2="280.5" stroke="#ffffff" stroke-width="1"/>
<line x1="865.5" y1="703.5" x2="1763.5" y2="703.5" stroke="#ffffff" stroke-width="1"/>
<line x1="1763.5" y1="280.5" x2="1763.5" y2="703.5" stroke="#ffffff" stroke-width="1"/>
<line x1="865.5" y1="272" x2="865.5" y2="703.5" stroke="#00ff00" stroke-width="1"/>
<line x1="865.5" y1="372.4" x2="865.5" y2="407.4" stroke="#0000ff" stroke-width="1"/>
<line x1="865.5" y1="520" x2="865.5" y2="534" stroke="#0000ff" stroke-width="1"/>
<polyline points="866,372.4 887.5,372.4 887.5,407.4 955.5,407.4 955.5,372.4 977.3,372.4 977.3,407.4 1045.5,407.4 1045.5,372.4 1067.3,372.4 1067.3,407.4 1134.5,407.4 1134.5,372.4 1156.3,372.4 1156.3,407.4 1224.5,407.4 1224.5,372.4 1246.3,372.4 1246.3,407.4 1314.5,407.4 1314.5,372.4 1336.3,372.4 1336.3,407.4 1404.5,407.4 1404.5,372.4 1426.3,372.4 1426.3,407.4 1494.5,407.4 1494.5,372.4 1516.3,372.4 1516.3,407.4 1583.5,407.4 1583.5,372.4 1605.3,372.4 1605.3,407.4 1628,407.4" stroke="#ff0000" stroke-width="1.2" fill="none" />
<circle cx="865.5" cy="407" r="3" fill="none" stroke="#ff00ff" stroke-width="1.2"/>
<polyline points="866,533.7 870.4,604.2 887.8,604.2 893.2,514.8 897,515.3 910.1,520.5 955.5,520.5 960.4,604.2 977.8,604.2 983.8,514.8 987.5,515.3 999.7,520.5 1045.5,520.5 1050.4,604.2 1067.8,604.2 1073.8,514.8 1077.5,515.3 1089.7,520.5 1134.5,520.5 1139.4,604.2 1156.8,604.2 1162.8,514.8 1166.5,515.3 1178.7,520.5 1224.5,520.5 1229.4,604.2 1246.8,604.2 1252.8,514.8 1256.5,515.3 1268.7,520.5 1314.5,520.5 1319.4,604.2 1336.8,604.2 1342.8,514.8 1346.5,515.3 1358.7,520.5 1404.5,520.5 1409.4,604.2 1426.8,604.2 1432.8,514.8 1436.5,515.3 1448.7,520.5 1494.5,520.5 1499.4,604.2 1516.8,604.2 1522.8,514.8 1526.5,515.3 1538.7,520.5 1583.5,520.5 1588.4,604.2 1605.8,604.2 1611.8,514.8 1615.5,515.3 1627.7,519.4" stroke="#ff0000" stroke-width="1.2" fill="none" />
<polygon points="857,272 874,272 865.5,281" fill="#ff00ff"/>
<polygon points="857,272 874,272 871.5,274.5 859.5,274.5" fill="#00ffff"/>
<rect x="864.5" y="273" width="2" height="5" fill="#000" stroke="none" stroke-width="1" />
<rect x="864.8" y="274" width="1.5" height="1" fill="#ffff00" stroke="none" stroke-width="1" />
<rect x="864.3" y="276" width="1.2" height="1" fill="#ffff00" stroke="none" stroke-width="1" />
<polyline points="871.8,721 866.5,725.5 871.8,730" fill="none" stroke="#555" stroke-width="2"/>
<rect x="962.2" y="715.3" width="782" height="20.3" fill="#cdcdcd" stroke="none" stroke-width="1" />
<polyline points="1756.5,721 1761.8,725.5 1756.5,730" fill="none" stroke="#555" stroke-width="2"/>
<line x1="854" y1="743.5" x2="1773" y2="743.5" stroke="#f0f0f0" stroke-width="1"/>
<rect x="854.5" y="743.5" width="98" height="104" fill="#f0f0f0" stroke="#a0a0a0" stroke-width="1" />
<line x1="855" y1="744.5" x2="952" y2="744.5" stroke="#ffffff" stroke-width="1"/>
<line x1="855.5" y1="744" x2="855.5" y2="847" stroke="#ffffff" stroke-width="1"/>
<line x1="853.5" y1="743" x2="853.5" y2="849" stroke="#ffffff" stroke-width="1"/>
<line x1="853" y1="848.5" x2="953" y2="848.5" stroke="#ffffff" stroke-width="1"/>
<line x1="953.5" y1="743" x2="953.5" y2="849" stroke="#ffffff" stroke-width="1"/>
<rect x="897.7" y="755.6" width="21.59999999999991" height="28.299999999999955" fill="#e1e1e1" stroke="#b4b4b4" stroke-width="1" />
<rect x="925.8" y="755.6" width="21.300000000000068" height="28.299999999999955" fill="#e1e1e1" stroke="#b4b4b4" stroke-width="1" />
<rect x="897.7" y="787.9" width="21.59999999999991" height="25.5" fill="#e1e1e1" stroke="#b4b4b4" stroke-width="1" />
<rect x="925.8" y="787.9" width="21.300000000000068" height="25.5" fill="#e1e1e1" stroke="#b4b4b4" stroke-width="1" />
<polygon points="901.5,769.2 909.5,761.0 909.5,765.9000000000001 917.5,765.9000000000001 917.5,772.5 909.5,772.5 909.5,777.4000000000001" fill="#000"/>
<polygon points="944.0,769.2 936.0,761.0 936.0,765.9000000000001 928.0,765.9000000000001 928.0,772.5 936.0,772.5 936.0,777.4000000000001" fill="#000"/>
<polygon points="901.5,800.5 909.5,792.3 909.5,797.2 917.5,797.2 917.5,803.8 909.5,803.8 909.5,808.7" fill="#000"/>
<polygon points="944.0,800.5 936.0,792.3 936.0,797.2 928.0,797.2 928.0,803.8 936.0,803.8 936.0,808.7" fill="#000"/>
<text x="864" y="775.8" font-family="Liberation Sans" font-size="18" fill="#000" text-anchor="start" >T1</text>
<text x="864" y="801.8" font-family="Liberation Sans" font-size="18" fill="#000" text-anchor="start" >T2</text>
<text x="864" y="836.6" font-family="Liberation Sans" font-size="18" fill="#000" text-anchor="start" >T2-T1</text>
<rect x="954" y="743" width="540" height="106" fill="#ffffff" stroke="none" stroke-width="1" />
<line x1="954" y1="743.5" x2="1493" y2="743.5" stroke="#a0a0a0" stroke-width="1"/>
<line x1="954.5" y1="743" x2="954.5" y2="848" stroke="#a0a0a0" stroke-width="1"/>
<line x1="955" y1="744.5" x2="1492" y2="744.5" stroke="#696969" stroke-width="1"/>
<line x1="955.5" y1="744" x2="955.5" y2="847" stroke="#696969" stroke-width="1"/>
<line x1="955" y1="847.5" x2="1493" y2="847.5" stroke="#e3e3e3" stroke-width="1"/>
<line x1="1492.5" y1="744" x2="1492.5" y2="848" stroke="#e3e3e3" stroke-width="1"/>
<text x="1004" y="763.7" font-family="Liberation Sans" font-size="18" fill="#000" text-anchor="start" >Time</text>
<text x="1102" y="763.7" font-family="Liberation Sans" font-size="18" fill="#000" text-anchor="start" >Channel_A</text>
<text x="1230.2" y="763.7" font-family="Liberation Sans" font-size="18" fill="#000" text-anchor="start" >Channel_B</text>
<text x="973.5" y="786.3" font-family="Liberation Sans" font-size="18" fill="#000" text-anchor="start"  letter-spacing="0.45">18.000 ms</text>
<text x="1113.6" y="786.3" font-family="Liberation Sans" font-size="18" fill="#000" text-anchor="start"  letter-spacing="0.3">0.000 V</text>
<text x="1235.8" y="786.3" font-family="Liberation Sans" font-size="18" fill="#000" text-anchor="start"  letter-spacing="0.4">11.981 V</text>
<text x="973.5" y="809.3" font-family="Liberation Sans" font-size="18" fill="#000" text-anchor="start"  letter-spacing="0.45">18.000 ms</text>
<text x="1113.6" y="809.3" font-family="Liberation Sans" font-size="18" fill="#000" text-anchor="start"  letter-spacing="0.3">0.000 V</text>
<text x="1235.8" y="809.3" font-family="Liberation Sans" font-size="18" fill="#000" text-anchor="start"  letter-spacing="0.4">11.981 V</text>
<text x="985.8" y="832.3" font-family="Liberation Sans" font-size="18" fill="#000" text-anchor="start"  letter-spacing="0.45">0.000 s</text>
<text x="1113.6" y="832.3" font-family="Liberation Sans" font-size="18" fill="#000" text-anchor="start"  letter-spacing="0.3">0.000 V</text>
<text x="1241.5" y="832.3" font-family="Liberation Sans" font-size="18" fill="#000" text-anchor="start"  letter-spacing="0.4">0.000 V</text>
<rect x="1505.7" y="756.0" width="101.70000000000005" height="37.0" fill="#e1e1e1" stroke="#b4b4b4" stroke-width="1" />
<text x="1556.5500000000002" y="781.5" font-family="Liberation Sans" font-size="18.5" fill="#000" text-anchor="middle" >Reverse</text>
<rect x="1505.7" y="804.8" width="101.70000000000005" height="37.10000000000002" fill="#e1e1e1" stroke="#b4b4b4" stroke-width="1" />
<text x="1556.5500000000002" y="830.8" font-family="Liberation Sans" font-size="18.5" fill="#000" text-anchor="middle" >Save</text>
<text x="1621" y="847.4" font-family="Liberation Sans" font-size="18" fill="#000" text-anchor="start"  letter-spacing="0.75">Ext. trigger</text>
<circle cx="1733.7" cy="842.7" r="9.3" fill="#fff" stroke="#c8c8c8" stroke-width="1"/>
<path d="M854,872.5 L860,872.5 M946,872.5 L1074,872.5 M854,1000.5 L1074,1000.5" fill="none" stroke="#dcdcdc" stroke-width="1"/>
<path d="M854,873.5 L860,873.5 M946,873.5 L1074,873.5 M854,1001.5 L1074,1001.5" fill="none" stroke="#ffffff" stroke-width="1"/>
<text x="862" y="879.4" font-family="Liberation Sans" font-size="18" fill="#000" text-anchor="start" >Timebase</text>
<path d="M1074,872.5 L1080,872.5 M1170,872.5 L1289,872.5 M1074,1000.5 L1289,1000.5" fill="none" stroke="#dcdcdc" stroke-width="1"/>
<path d="M1074,873.5 L1080,873.5 M1170,873.5 L1289,873.5 M1074,1001.5 L1289,1001.5" fill="none" stroke="#ffffff" stroke-width="1"/>
<path d="M1074.5,872 L1074.5,1001" fill="none" stroke="#dcdcdc" stroke-width="1"/><path d="M1075.5,873 L1075.5,1000" fill="none" stroke="#ffffff" stroke-width="1"/>
<text x="1082" y="879.4" font-family="Liberation Sans" font-size="18" fill="#000" text-anchor="start" >Channel A</text>
<path d="M1289,872.5 L1295,872.5 M1385,872.5 L1505.5,872.5 M1289,1000.5 L1505.5,1000.5" fill="none" stroke="#dcdcdc" stroke-width="1"/>
<path d="M1289,873.5 L1295,873.5 M1385,873.5 L1505.5,873.5 M1289,1001.5 L1505.5,1001.5" fill="none" stroke="#ffffff" stroke-width="1"/>
<path d="M1289.5,872 L1289.5,1001" fill="none" stroke="#dcdcdc" stroke-width="1"/><path d="M1290.5,873 L1290.5,1000" fill="none" stroke="#ffffff" stroke-width="1"/>
<text x="1297" y="879.4" font-family="Liberation Sans" font-size="18" fill="#000" text-anchor="start" >Channel B</text>
<path d="M1505.5,872.5 L1511.5,872.5 M1577.5,872.5 L1770.5,872.5 M1505.5,1000.5 L1770.5,1000.5" fill="none" stroke="#dcdcdc" stroke-width="1"/>
<path d="M1505.5,873.5 L1511.5,873.5 M1577.5,873.5 L1770.5,873.5 M1505.5,1001.5 L1770.5,1001.5" fill="none" stroke="#ffffff" stroke-width="1"/>
<path d="M1506.0,872 L1506.0,1001" fill="none" stroke="#dcdcdc" stroke-width="1"/><path d="M1507.0,873 L1507.0,1000" fill="none" stroke="#ffffff" stroke-width="1"/>
<path d="M1770.0,872 L1770.0,1001" fill="none" stroke="#dcdcdc" stroke-width="1"/><path d="M1771.0,872 L1771.0,1002" fill="none" stroke="#ffffff" stroke-width="1"/>
<text x="1513.5" y="879.4" font-family="Liberation Sans" font-size="18" fill="#000" text-anchor="start" >Trigger</text>
<text x="859.3" y="910.7" font-family="Liberation Sans" font-size="18" fill="#000" text-anchor="start" >Scale:</text>
<text x="859.3" y="945.4" font-family="Liberation Sans" font-size="18" fill="#000" text-anchor="start"  letter-spacing="0.5">X pos.(Div):</text>
<rect x="921.7" y="884.7" width="141.5999999999999" height="32.299999999999955" fill="#ffffff" stroke="#7a7a7a" stroke-width="1" />
<text x="927.1" y="905.7" font-family="Liberation Sans" font-size="18" fill="#000" text-anchor="start" >1 ms/Div</text>
<rect x="964.7" y="922.0" width="98.59999999999991" height="33.200000000000045" fill="#ffffff" stroke="#7a7a7a" stroke-width="1" />
<text x="969.5" y="943.0" font-family="Liberation Sans" font-size="18" fill="#000" text-anchor="start" >0</text>
<rect x="867.6" y="962.8" width="39.799999999999955" height="31.300000000000068" fill="#cce4f7" stroke="#0055a0" stroke-width="1" />
<text x="887.5" y="985.8" font-family="Liberation Sans" font-size="18" fill="#000" text-anchor="middle" >Y/T</text>
<rect x="910.8" y="962.8" width="46.5" height="31.300000000000068" fill="#e1e1e1" stroke="#b4b4b4" stroke-width="1" />
<text x="934.05" y="985.8" font-family="Liberation Sans" font-size="18" fill="#000" text-anchor="middle" >Add</text>
<rect x="962.7" y="962.8" width="44.39999999999998" height="31.300000000000068" fill="#e1e1e1" stroke="#b4b4b4" stroke-width="1" />
<text x="984.9000000000001" y="985.8" font-family="Liberation Sans" font-size="18" fill="#000" text-anchor="middle" >B/A</text>
<rect x="1010.8" y="962.8" width="43.600000000000136" height="31.300000000000068" fill="#e1e1e1" stroke="#b4b4b4" stroke-width="1" />
<text x="1032.6" y="985.8" font-family="Liberation Sans" font-size="18" fill="#000" text-anchor="middle" >A/B</text>
<text x="1079.3" y="910.7" font-family="Liberation Sans" font-size="18" fill="#000" text-anchor="start" >Scale:</text>
<text x="1079.3" y="945.4" font-family="Liberation Sans" font-size="18" fill="#000" text-anchor="start"  letter-spacing="0.5">Y pos.(Div):</text>
<rect x="1141.7" y="884.7" width="141.5999999999999" height="32.299999999999955" fill="#ffffff" stroke="#7a7a7a" stroke-width="1" />
<text x="1147.1" y="905.7" font-family="Liberation Sans" font-size="18" fill="#000" text-anchor="start" >10&#160;&#160;V/Div</text>
<rect x="1184.7" y="922.0" width="98.59999999999991" height="33.200000000000045" fill="#ffffff" stroke="#7a7a7a" stroke-width="1" />
<text x="1190.2" y="943.0" font-family="Liberation Sans" font-size="18" fill="#000" text-anchor="start" >1.2</text>
<rect x="1080.7" y="962.8" width="41.399999999999864" height="31.300000000000068" fill="#e1e1e1" stroke="#b4b4b4" stroke-width="1" />
<text x="1101.4" y="985.8" font-family="Liberation Sans" font-size="18" fill="#000" text-anchor="middle" >AC</text>
<rect x="1125.8" y="962.8" width="41.299999999999955" height="31.300000000000068" fill="#e1e1e1" stroke="#b4b4b4" stroke-width="1" />
<text x="1146.4499999999998" y="985.8" font-family="Liberation Sans" font-size="18" fill="#000" text-anchor="middle" >0</text>
<rect x="1170.8" y="962.8" width="41.40000000000009" height="31.300000000000068" fill="#cce4f7" stroke="#0055a0" stroke-width="1" />
<text x="1191.5" y="985.8" font-family="Liberation Sans" font-size="18" fill="#000" text-anchor="middle" >DC</text>
<circle cx="1265.9" cy="976.9" r="9.3" fill="#fff" stroke="#d0d0d0" stroke-width="1"/><circle cx="1265.9" cy="976.9" r="4.8" fill="#c4c4c4"/>
<text x="1294.3" y="910.7" font-family="Liberation Sans" font-size="18" fill="#000" text-anchor="start" >Scale:</text>
<text x="1294.3" y="945.4" font-family="Liberation Sans" font-size="18" fill="#000" text-anchor="start"  letter-spacing="0.5">Y pos.(Div):</text>
<rect x="1359.7" y="884.7" width="140.29999999999995" height="32.299999999999955" fill="#ffffff" stroke="#7a7a7a" stroke-width="1" />
<text x="1364.8" y="905.7" font-family="Liberation Sans" font-size="18" fill="#000" text-anchor="start" >10&#160;&#160;V/Div</text>
<rect x="1401.7" y="922.0" width="98.29999999999995" height="33.200000000000045" fill="#ffffff" stroke="#7a7a7a" stroke-width="1" />
<text x="1406.5" y="943.0" font-family="Liberation Sans" font-size="18" fill="#000" text-anchor="start" >-1.6</text>
<rect x="1297.7" y="965.7" width="39.399999999999864" height="31.09999999999991" fill="#e1e1e1" stroke="#b4b4b4" stroke-width="1" />
<text x="1317.4" y="988.7" font-family="Liberation Sans" font-size="18" fill="#000" text-anchor="middle" >AC</text>
<rect x="1340.8" y="965.7" width="36.40000000000009" height="31.09999999999991" fill="#e1e1e1" stroke="#b4b4b4" stroke-width="1" />
<text x="1359.0" y="988.7" font-family="Liberation Sans" font-size="18" fill="#000" text-anchor="middle" >0</text>
<rect x="1380.8" y="965.7" width="41.299999999999955" height="31.09999999999991" fill="#cce4f7" stroke="#0055a0" stroke-width="1" />
<text x="1401.4499999999998" y="988.7" font-family="Liberation Sans" font-size="18" fill="#000" text-anchor="middle" >DC</text>
<rect x="1425.8" y="965.7" width="31.200000000000045" height="31.09999999999991" fill="#e1e1e1" stroke="#b4b4b4" stroke-width="1" />
<text x="1441.4" y="988.7" font-family="Liberation Sans" font-size="18" fill="#000" text-anchor="middle" >-</text>
<circle cx="1490.9" cy="979.8" r="9.3" fill="#fff" stroke="#d0d0d0" stroke-width="1"/><circle cx="1490.9" cy="979.8" r="4.8" fill="#c4c4c4"/>
<text x="1514.7" y="910.6" font-family="Liberation Sans" font-size="18" fill="#000" text-anchor="start" >Edge:</text>
<text x="1514.7" y="945" font-family="Liberation Sans" font-size="18" fill="#000" text-anchor="start" >Level:</text>
<rect x="1590.6" y="891.9" width="26.700000000000045" height="27.100000000000023" fill="#cce4f7" stroke="#0055a0" stroke-width="1" />
<rect x="1620.7" y="891.9" width="26.700000000000045" height="27.100000000000023" fill="#e1e1e1" stroke="#b4b4b4" stroke-width="1" />
<path d="M1595,912 L1603,912 L1603,900 L1611,900" fill="none" stroke="#000" stroke-width="2"/>
<rect x="1600.1" y="904" width="5.7" height="2" fill="#000" stroke="none" stroke-width="1" />
<rect x="1599" y="906" width="1.2" height="2" fill="#000" stroke="none" stroke-width="1" />
<rect x="1606" y="906" width="1.2" height="2" fill="#000" stroke="none" stroke-width="1" />
<path d="M1625,898 L1633,898 L1633,910 L1641,910" fill="none" stroke="#000" stroke-width="2"/>
<rect x="1630.1" y="904.2" width="5.8" height="1.8" fill="#000" stroke="none" stroke-width="1" />
<rect x="1629" y="902" width="1.2" height="2" fill="#000" stroke="none" stroke-width="1" />
<rect x="1636" y="902" width="1.2" height="2" fill="#000" stroke="none" stroke-width="1" />
<rect x="1655.8" y="891.9" width="28.40000000000009" height="29.899999999999977" fill="#cce4f7" stroke="#0055a0" stroke-width="1" />
<text x="1670.0" y="914" font-family="Liberation Sans" font-size="18" fill="#000" text-anchor="middle" >A</text>
<rect x="1687.8" y="891.9" width="29.600000000000136" height="29.899999999999977" fill="#cccccc" stroke="#bfbfbf" stroke-width="1" />
<text x="1702.6" y="914" font-family="Liberation Sans" font-size="18" fill="#838383" text-anchor="middle" >B</text>
<rect x="1720.7" y="891.9" width="36.59999999999991" height="29.899999999999977" fill="#cccccc" stroke="#bfbfbf" stroke-width="1" />
<text x="1739.0" y="914" font-family="Liberation Sans" font-size="18" fill="#838383" text-anchor="middle" >Ext</text>
<rect x="1589.8" y="927.8" width="120.70000000000005" height="32.200000000000045" fill="#ffffff" stroke="#7a7a7a" stroke-width="1" />
<text x="1594.3" y="948.8" font-family="Liberation Sans" font-size="18" fill="#000" text-anchor="start" >0</text>
<rect x="1711.0" y="927.8" width="46.90000000000009" height="32.200000000000045" fill="#ffffff" stroke="#7a7a7a" stroke-width="1" />
<text x="1722.5" y="948.8" font-family="Liberation Sans" font-size="18" fill="#000" text-anchor="start" >V</text>
<rect x="1515.6" y="963.0" width="61.5" height="31.0" fill="#e1e1e1" stroke="#b4b4b4" stroke-width="1" />
<text x="1546.35" y="985.8" font-family="Liberation Sans" font-size="18" fill="#000" text-anchor="middle" >Single</text>
<rect x="1580.9" y="963.0" width="71.29999999999995" height="31.0" fill="#e1e1e1" stroke="#b4b4b4" stroke-width="1" />
<text x="1616.5500000000002" y="985.8" font-family="Liberation Sans" font-size="18" fill="#000" text-anchor="middle" >Normal</text>
<rect x="1655.8" y="963.0" width="48.5" height="31.0" fill="#e1e1e1" stroke="#b4b4b4" stroke-width="1" />
<text x="1680.05" y="985.8" font-family="Liberation Sans" font-size="18" fill="#000" text-anchor="middle" >Auto</text>
<rect x="1707.9" y="963.0" width="54.299999999999955" height="31.0" fill="#cce4f7" stroke="#0055a0" stroke-width="1" />
<text x="1735.0500000000002" y="985.8" font-family="Liberation Sans" font-size="18" fill="#000" text-anchor="middle" >None</text>
<rect x="1771.2" y="991.0" width="1.6" height="1.6" fill="#a0a0a0" stroke="none" stroke-width="1" />
<rect x="1771.2" y="995.0" width="1.6" height="1.6" fill="#a0a0a0" stroke="none" stroke-width="1" />
<rect x="1771.2" y="999.0" width="1.6" height="1.6" fill="#a0a0a0" stroke="none" stroke-width="1" />
<rect x="1767.2" y="995.0" width="1.6" height="1.6" fill="#a0a0a0" stroke="none" stroke-width="1" />
<rect x="1767.2" y="999.0" width="1.6" height="1.6" fill="#a0a0a0" stroke="none" stroke-width="1" />
<rect x="1763.2" y="999.0" width="1.6" height="1.6" fill="#a0a0a0" stroke="none" stroke-width="1" />
<path d="M1650,1151.8 L1657.8,1151.8 L1657.8,1155.1 L1649.6,1155.1 L1649.6,1178 Q1649.6,1180 1647.6,1180 L1646.8,1180 L1646.8,1155 Q1646.8,1151.8 1650,1151.8 Z" fill="#0b3c7c"/>
<path d="M1653,1157.4 L1656.5,1157.4 Q1657.8,1157.4 1657.8,1159 L1657.8,1180 L1651.5,1180 L1651.5,1159 Q1651.5,1157.4 1653,1157.4 Z M1654,1161 L1654,1176 L1655.5,1176 L1655.5,1161 Z" fill="#0b3c7c" fill-rule="evenodd"/>
<rect x="1665.3" y="1151.2" width="4.5" height="2.7999999999999545" rx="0" fill="#0b3c7c"/>
<path d="M1662.5,1153.4 L1675.9,1153.4 L1675.9,1156.7 L1663.9,1156.7 L1663.9,1177 Q1663.9,1180 1661,1180 L1659.7,1180 L1659.7,1156.5 Q1659.7,1153.4 1662.5,1153.4 Z" fill="#0b3c7c"/>
<path d="M1682,1151.3 L1707.3,1151.3 L1707.3,1155.1 L1683.9,1155.1 L1683.9,1177 Q1683.9,1180 1681,1180 L1678.7,1180 L1678.7,1155 Q1678.7,1151.3 1682,1151.3 Z" fill="#0b3c7c"/>
<path d="M1689,1158.4 L1704,1158.4 Q1706.8,1158.4 1706.8,1161 L1706.8,1180 L1686,1180 L1686,1161 Q1686,1158.4 1689,1158.4 Z M1690.9,1162.1 L1690.9,1176 L1701.9,1176 L1701.9,1164 Q1701.9,1162.1 1700,1162.1 Z" fill="#0b3c7c" fill-rule="evenodd"/>
<path d="M1710.8,1152.2 L1714.6,1152.2 L1714.6,1174 L1716.9,1174 L1716.9,1151.4 L1720.6,1151.4 L1720.6,1179.8 L1716.9,1179.8 L1716.9,1177.5 L1713.5,1177.5 Q1710.8,1177.5 1710.8,1175 Z" fill="#0b3c7c"/>
<path d="M1725,1151.4 L1731.5,1151.4 L1730.5,1154.2 L1736.5,1154.2 Q1739,1154.6 1738.6,1157.2 L1729.5,1179.8 L1724.1,1179.8 L1734,1157.3 L1729.3,1157.3 L1727.8,1160.5 L1730.5,1162.2 L1729.5,1164.2 L1724,1161.5 Z" fill="#0b3c7c"/>
<path d="M1728.5,1167 L1731,1161.5 L1738.6,1179.8 L1733.5,1179.8 Z" fill="#0b3c7c"/>
<rect x="1754.2" y="1151.2" width="3.7999999999999545" height="2.2999999999999545" rx="0" fill="#0b3c7c"/>
<rect x="1742.4" y="1152.8" width="27.5" height="3.2000000000000455" rx="0" fill="#0b3c7c"/>
<path d="M1745.3,1155.5 L1767.8,1155.5 L1765.2,1161 L1746.9,1161 Z M1750.7,1156.7 L1761.7,1156.7 Q1760.5,1160.7 1756.2,1160.7 Q1751.9,1160.7 1750.7,1156.7 Z" fill="#0b3c7c" fill-rule="evenodd"/>
<rect x="1741.8" y="1160.6" width="29.0" height="3.5" rx="0" fill="#0b3c7c"/>
<path d="M1745.5,1166.1 L1767,1166.1 Q1769.3,1166.1 1769.3,1168.5 L1769.3,1179.8 L1743,1179.8 L1743,1168.5 Q1743,1166.1 1745.5,1166.1 Z M1747.6,1169.9 L1764.4,1169.9 L1764.4,1171.4 L1747.6,1171.4 Z M1747.6,1174.8 L1764.4,1174.8 L1764.4,1176.6 L1747.6,1176.6 Z" fill="#0b3c7c" fill-rule="evenodd"/>
<rect x="1773.7" y="1153.7" width="11.799999999999955" height="3.5" rx="0" fill="#0b3c7c"/>
<rect x="1777.7" y="1151.4" width="4.099999999999909" height="28.399999999999864" rx="0" fill="#0b3c7c"/>
<path d="M1774,1159 Q1775.8,1159.3 1775.8,1162 L1775.8,1175.5 Q1775.5,1177.3 1773.7,1177.4 Z" fill="#0b3c7c"/>
<ellipse cx="1784.5" cy="1167.3" rx="1.6" ry="6.1" fill="#0b3c7c"/>
<path d="M1791,1151.4 L1798.5,1151.4 Q1800.9,1151.4 1800.9,1154 L1800.9,1176.5 L1802.3,1177.5 L1802.3,1179.8 L1799,1179.8 Q1796.3,1179.8 1796.3,1177 L1796.3,1155.7 L1791.9,1155.7 L1791.9,1179.8 L1787.8,1179.8 L1787.8,1154.5 Q1787.8,1151.4 1791,1151.4 Z" fill="#0b3c7c"/>
<text x="1646.6" y="1201.5" font-family="Liberation Sans" font-size="17.5" font-weight="bold" fill="#0c2a66" textLength="157" lengthAdjust="spacingAndGlyphs">www.crystalradio.cn</text>
</svg>
</body></html>
